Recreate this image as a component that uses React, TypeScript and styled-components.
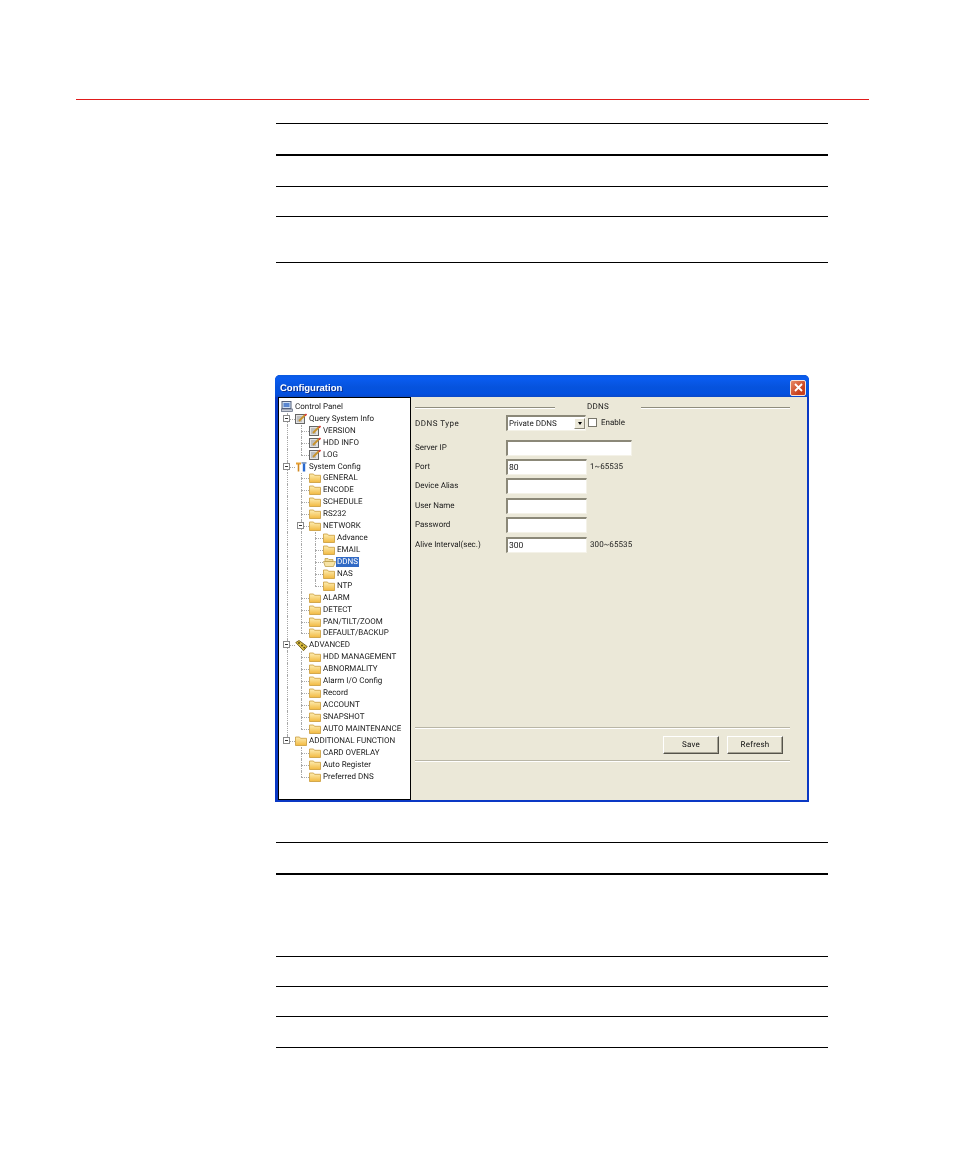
import React from 'react';
import styled, { createGlobalStyle } from 'styled-components';

const Global = createGlobalStyle`
  html, body { margin: 0; padding: 0; background: #fff; }
  body { font-family: Roboto, "Liberation Sans", Arial, sans-serif; }
`;

const Page = styled.div`
  width: 955px;
  height: 1157px;
  padding-top: 99px;
  box-sizing: border-box;
  overflow: hidden;
`;
const HeaderRule = styled.div`
  height: 1px;
  width: 793px;
  margin-left: 76px;
  background: #e01b1b;
`;
const RuleTable = styled.div<{ $top: number }>`
  margin: ${p => p.$top}px 0 0 276px;
  width: 552px;
`;
const TableRow = styled.div<{ $h: number; $b?: number }>`
  height: ${p => p.$h}px;
  box-sizing: border-box;
  border-bottom: ${p => p.$b ?? 1}px solid #000;
`;
const Window = styled.div`
  margin: 112px 0 0 275px;
  width: 534px;
  height: 427px;
  box-sizing: border-box;
  background: #0a38c4;
  border-radius: 5px 5px 0 0;
  display: flex;
  flex-direction: column;
  padding: 0 2px 2px 3px;
  filter: blur(0.3px);
  text-rendering: geometricPrecision;
`;
const TitleBar = styled.div`
  height: 22px;
  flex: none;
  box-sizing: border-box;
  margin: 0 -2px 0 -3px;
  padding: 3px 3px 0 5px;
  border-radius: 5px 5px 0 0;
  background: linear-gradient(180deg, #0a5ae0 0%, #0a5cf0 15%, #0653dd 55%, #0350e0 85%, #0a49c8 100%);
  display: flex;
  align-items: center;
  justify-content: space-between;
`;
const TitleText = styled.span`
  margin-top: 2px;
  color: #fff;
  font: bold 9.5px "Liberation Sans", sans-serif;
  text-shadow: 1px 1px 0 #0a2f90;
`;
const CloseBox = styled.div`
  width: 16px;
  height: 16px;
  box-sizing: border-box;
  border: 1px solid #f4e4dc;
  border-radius: 2px;
  background: linear-gradient(135deg, #e88a66, #c8401c 70%);
  display: flex;
  align-items: center;
  justify-content: center;
`;
const Body = styled.div`
  flex: 1;
  display: flex;
  background: #ebe8d8;
  min-height: 0;
`;
const TreePane = styled.div`
  width: 133px;
  flex: none;
  box-sizing: border-box;
  background: #fff;
  border: 1px solid #000;
  padding-top: 3px;
  font-size: 8px;
  color: #111;
`;
const Row = styled.div<{ $depth: number }>`
  position: relative;
  height: 11.935px;
  display: flex;
  align-items: center;
  padding-left: ${p => 1 + p.$depth * 14}px;
  white-space: nowrap;
`;
const Guide = styled.span<{ $x: number; $tall?: boolean }>`
  position: absolute;
  left: ${p => p.$x}px;
  top: 0;
  height: ${p => (p.$tall ? '100%' : '50%')};
  border-left: 1px dotted #a8a8a8;
`;
const Stub = styled.span<{ $x: number }>`
  position: absolute;
  left: ${p => p.$x}px;
  top: 50%;
  width: 8px;
  border-top: 1px dotted #a8a8a8;
`;
const Expander = styled.span<{ $x: number }>`
  position: absolute;
  left: ${p => p.$x}px;
  top: 2px;
  width: 7px;
  height: 7px;
  box-sizing: border-box;
  background: #fff;
  border: 1px solid #8a8a8a;
  &::after {
    content: '';
    position: absolute;
    left: 1px;
    top: 2px;
    width: 3px;
    height: 1px;
    background: #333;
  }
`;
const IconSlot = styled.span`
  width: 14px;
  height: 11px;
  flex: none;
  position: relative;
  display: flex;
  align-items: center;
  justify-content: center;
`;
const Label = styled.span<{ $selected?: boolean }>`
  padding: 0 1px;
  line-height: 10px;
  background: ${p => (p.$selected ? '#316ac5' : 'transparent')};
  color: ${p => (p.$selected ? '#fff' : '#1a1a1a')};
`;
const Panel = styled.div`
  flex: 1;
  display: flex;
  flex-direction: column;
  padding: 7px 17px 0 4px;
  font-size: 8px;
  color: #1a1a1a;
  min-width: 0;
`;
const GroupHead = styled.div`
  height: 8px;
  display: flex;
  align-items: center;
`;
const GroovePiece = styled.div<{ $w?: number }>`
  height: 2px;
  ${p => (p.$w ? `width:${p.$w}px;` : 'flex:1;')}
  background: linear-gradient(180deg, #8f8d7e 50%, #fff 50%);
`;
const GroupTitle = styled.span`
  width: 86px;
  margin-top: -3px;
  text-align: center;
  letter-spacing: 0.2px;
`;
const FormRow = styled.div<{ $gap?: number }>`
  height: 19px;
  margin-top: ${p => p.$gap ?? 0}px;
  display: flex;
  align-items: center;
`;
const SelectRow = styled(FormRow)`
  height: 20px;
`;
const FieldLabel = styled.span`
  width: 91px;
  flex: none;
`;
const TypeLabel = styled(FieldLabel)`
  letter-spacing: 0.5px;
`;
const Input = styled.div<{ $w?: number }>`
  width: ${p => p.$w ?? 81}px;
  height: 16px;
  flex: none;
  box-sizing: border-box;
  background: #fff;
  border-top: 2px solid #8b8878;
  border-left: 2px solid #8b8878;
  border-right: 1px solid #f4f2e8;
  border-bottom: 1px solid #f4f2e8;
  padding-left: 1px;
  line-height: 14px;
  font-size: 8.5px;
`;
const Hint = styled.span`
  margin-left: 3px;
  letter-spacing: 0.1px;
`;
const Select = styled.div`
  width: 80px;
  height: 16px;
  flex: none;
  box-sizing: border-box;
  background: #fff;
  border-top: 2px solid #8b8878;
  border-left: 2px solid #8b8878;
  border-right: 1px solid #f4f2e8;
  border-bottom: 1px solid #f4f2e8;
  display: flex;
  align-items: center;
  justify-content: space-between;
  padding-left: 1px;
`;
const SelectArrow = styled.div`
  width: 11px;
  height: 11px;
  background: #ebe8d8;
  border: 1px solid;
  border-color: #fff #8b8878 #8b8878 #fff;
  box-sizing: border-box;
  display: flex;
  align-items: center;
  justify-content: center;
  &::after {
    content: '';
    border: 2.5px solid transparent;
    border-top: 3px solid #000;
    border-bottom: 0;
  }
`;
const Check = styled.div`
  width: 9px;
  height: 9px;
  margin: -2px 4px 0 2px;
  background: #fff;
  box-sizing: border-box;
  border: 1px solid #77756a;
`;
const CheckLabel = styled.span`
  margin-top: -2px;
`;
const Spacer = styled.div`
  flex: 1;
`;
const ThinRule = styled.div`
  height: 2px;
  background: linear-gradient(180deg, #b9b6a6 50%, #fff 50%);
`;
const ButtonBar = styled.div`
  height: 31px;
  display: flex;
  align-items: center;
  justify-content: flex-end;
  gap: 8px;
  padding: 0 7px 0 0;
`;
const Button = styled.div`
  width: 56px;
  height: 18px;
  box-sizing: border-box;
  background: #ebe8d8;
  border: 1px solid;
  border-color: #fff #55534a #55534a #fff;
  box-shadow: inset -1px -1px 0 #a5a294;
  display: flex;
  align-items: center;
  justify-content: center;
  letter-spacing: 0.2px;
  color: #111;
`;
const BottomGap = styled.div`
  height: 38px;
`;

const PcIcon = () => (
  <svg width="12" height="11" viewBox="0 0 12 11">
    <rect x="1" y="0.5" width="9" height="7" fill="#cfe0f5" stroke="#55607a" />
    <rect x="2.5" y="2" width="6" height="4" fill="#5a86d0" />
    <rect x="0.5" y="8" width="11" height="2.5" fill="#c9cdd6" stroke="#55607a" strokeWidth="0.7" />
  </svg>
);
const NoteIcon = () => (
  <svg width="12" height="11" viewBox="0 0 12 11">
    <rect x="0.5" y="1.5" width="9" height="9" fill="#e2e2e2" stroke="#666" />
    <path d="M2 4h5M2 6h4M2 8h5" stroke="#888" strokeWidth="0.8" />
    <path d="M4 8L10 2" stroke="#c8922a" strokeWidth="1.8" />
    <path d="M10 2.6L11.5 1" stroke="#d83030" strokeWidth="1.6" />
  </svg>
);
const ToolsIcon = () => (
  <svg width="12" height="11" viewBox="0 0 12 11">
    <path d="M1 1.5h5v2H1z" fill="#e8a030" />
    <path d="M3.5 3v7.5" stroke="#d08820" strokeWidth="1.6" />
    <path d="M6.5 1h5v1.8h-5z" fill="#8aa0c0" />
    <path d="M9 2.5V10.5" stroke="#2a6ad0" strokeWidth="2.4" />
  </svg>
);
const TagsIcon = () => (
  <svg width="13" height="11" viewBox="0 0 13 11">
    <path d="M0.8 2.5L4 0.5L12.2 6.5L8.5 10.7Z" fill="#d8bc40" stroke="#6e5a18" strokeWidth="0.9" />
    <circle cx="4" cy="3" r="1" fill="#5a4a10" />
    <circle cx="7" cy="5.5" r="1" fill="#5a4a10" />
    <circle cx="9.2" cy="7.6" r="0.9" fill="#5a4a10" />
  </svg>
);
const FolderIcon = ({ open }: { open?: boolean }) =>
  open ? (
    <svg width="13" height="10" viewBox="0 0 13 10">
      <path d="M2 1.5h3l1 1h4v2H2z" fill="#f3dc9a" stroke="#b8963e" strokeWidth="0.7" />
      <path d="M0.5 4.5h9.5l2.5 0-2 5H2.2Z" fill="#f7e3a4" stroke="#b8963e" strokeWidth="0.7" />
    </svg>
  ) : (
    <svg width="12" height="10" viewBox="0 0 12 10">
      <defs>
        <linearGradient id="fld" x1="0" y1="0" x2="0" y2="1">
          <stop offset="0" stopColor="#fdeeb4" />
          <stop offset="1" stopColor="#f2b940" />
        </linearGradient>
      </defs>
      <path d="M0.5 1h4l1 1.3h6v7.2h-11z" fill="url(#fld)" stroke="#c99a38" strokeWidth="0.8" />
    </svg>
  );

type Kind = 'pc' | 'note' | 'tools' | 'tags' | 'folder' | 'open';
type Node = { t: string; d: number; k: Kind; exp?: boolean; sel?: boolean; g: number[]; last?: boolean };

const nodes: Node[] = [
  { t: 'Control Panel', d: 0, k: 'pc', g: [] },
  { t: 'Query System Info', d: 1, k: 'note', exp: true, g: [] },
  { t: 'VERSION', d: 2, k: 'note', g: [1] },
  { t: 'HDD INFO', d: 2, k: 'note', g: [1] },
  { t: 'LOG', d: 2, k: 'note', g: [1], last: true },
  { t: 'System Config', d: 1, k: 'tools', exp: true, g: [] },
  { t: 'GENERAL', d: 2, k: 'folder', g: [1] },
  { t: 'ENCODE', d: 2, k: 'folder', g: [1] },
  { t: 'SCHEDULE', d: 2, k: 'folder', g: [1] },
  { t: 'RS232', d: 2, k: 'folder', g: [1] },
  { t: 'NETWORK', d: 2, k: 'folder', exp: true, g: [1] },
  { t: 'Advance', d: 3, k: 'folder', g: [1, 2] },
  { t: 'EMAIL', d: 3, k: 'folder', g: [1, 2] },
  { t: 'DDNS', d: 3, k: 'open', sel: true, g: [1, 2] },
  { t: 'NAS', d: 3, k: 'folder', g: [1, 2] },
  { t: 'NTP', d: 3, k: 'folder', g: [1, 2], last: true },
  { t: 'ALARM', d: 2, k: 'folder', g: [1] },
  { t: 'DETECT', d: 2, k: 'folder', g: [1] },
  { t: 'PAN/TILT/ZOOM', d: 2, k: 'folder', g: [1] },
  { t: 'DEFAULT/BACKUP', d: 2, k: 'folder', g: [1], last: true },
  { t: 'ADVANCED', d: 1, k: 'tags', exp: true, g: [] },
  { t: 'HDD MANAGEMENT', d: 2, k: 'folder', g: [1] },
  { t: 'ABNORMALITY', d: 2, k: 'folder', g: [1] },
  { t: 'Alarm I/O Config', d: 2, k: 'folder', g: [1] },
  { t: 'Record', d: 2, k: 'folder', g: [1] },
  { t: 'ACCOUNT', d: 2, k: 'folder', g: [1] },
  { t: 'SNAPSHOT', d: 2, k: 'folder', g: [1] },
  { t: 'AUTO MAINTENANCE', d: 2, k: 'folder', g: [1], last: true },
  { t: 'ADDITIONAL FUNCTION', d: 1, k: 'folder', exp: true, g: [] },
  { t: 'CARD OVERLAY', d: 2, k: 'folder', g: [1] },
  { t: 'Auto Register', d: 2, k: 'folder', g: [1] },
  { t: 'Preferred DNS', d: 2, k: 'folder', g: [1], last: true },
];

const iconFor = (k: Kind) => {
  switch (k) {
    case 'pc': return <PcIcon />;
    case 'note': return <NoteIcon />;
    case 'tools': return <ToolsIcon />;
    case 'tags': return <TagsIcon />;
    case 'open': return <FolderIcon open />;
    default: return <FolderIcon />;
  }
};

const guideX = (level: number) => 8 + level * 14;

const TreeRow = ({ n, index }: { n: Node; index: number }) => (
  <Row $depth={n.d}>
    {index > 0 && index <= 28 && <Guide $x={guideX(0)} $tall={index < 28} />}
    {n.g.map(l => (
      <Guide key={l} $x={guideX(l)} $tall={l !== n.d - 1 || !n.last} />
    ))}
    {n.d > 0 && <Stub $x={guideX(n.d - 1)} />}
    {n.exp && <Expander $x={guideX(n.d - 1) - 4} />}
    <IconSlot>{iconFor(n.k)}</IconSlot>
    <Label $selected={n.sel}>{n.t}</Label>
  </Row>
);

export default function App() {
  return (
    <Page>
      <Global />
      <HeaderRule />
      <RuleTable $top={23}>
        <TableRow $h={1} />
        <TableRow $h={32} $b={2} />
        <TableRow $h={31} />
        <TableRow $h={30} />
        <TableRow $h={46} />
      </RuleTable>
      <Window>
        <TitleBar>
          <TitleText>Configuration</TitleText>
          <CloseBox>
            <svg width="9" height="9" viewBox="0 0 9 9">
              <path d="M1 1L8 8M8 1L1 8" stroke="#fff" strokeWidth="1.8" />
            </svg>
          </CloseBox>
        </TitleBar>
        <Body>
          <TreePane>
            {nodes.map((n, i) => (
              <TreeRow key={n.t} n={n} index={i} />
            ))}
          </TreePane>
          <Panel>
            <GroupHead>
              <GroovePiece $w={140} />
              <GroupTitle>DDNS</GroupTitle>
              <GroovePiece />
            </GroupHead>
            <SelectRow $gap={1}>
              <TypeLabel>DDNS Type</TypeLabel>
              <Select>
                Private DDNS
                <SelectArrow />
              </Select>
              <Check />
              <CheckLabel>Enable</CheckLabel>
            </SelectRow>
            <FormRow $gap={5}>
              <FieldLabel>Server IP</FieldLabel>
              <Input $w={126} />
            </FormRow>
            <FormRow>
              <FieldLabel>Port</FieldLabel>
              <Input>80</Input>
              <Hint>1~65535</Hint>
            </FormRow>
            <FormRow>
              <FieldLabel>Device Alias</FieldLabel>
              <Input />
            </FormRow>
            <FormRow $gap={1}>
              <FieldLabel>User Name</FieldLabel>
              <Input />
            </FormRow>
            <FormRow>
              <FieldLabel>Password</FieldLabel>
              <Input />
            </FormRow>
            <FormRow $gap={1}>
              <FieldLabel>Alive Interval(sec.)</FieldLabel>
              <Input>300</Input>
              <Hint>300~65535</Hint>
            </FormRow>
            <Spacer />
            <ThinRule />
            <ButtonBar>
              <Button>Save</Button>
              <Button>Refresh</Button>
            </ButtonBar>
            <ThinRule />
            <BottomGap />
          </Panel>
        </Body>
      </Window>
      <RuleTable $top={40}>
        <TableRow $h={1} />
        <TableRow $h={32} $b={2} />
        <TableRow $h={82} />
        <TableRow $h={30} />
        <TableRow $h={30} />
        <TableRow $h={31} />
      </RuleTable>
    </Page>
  );
}
